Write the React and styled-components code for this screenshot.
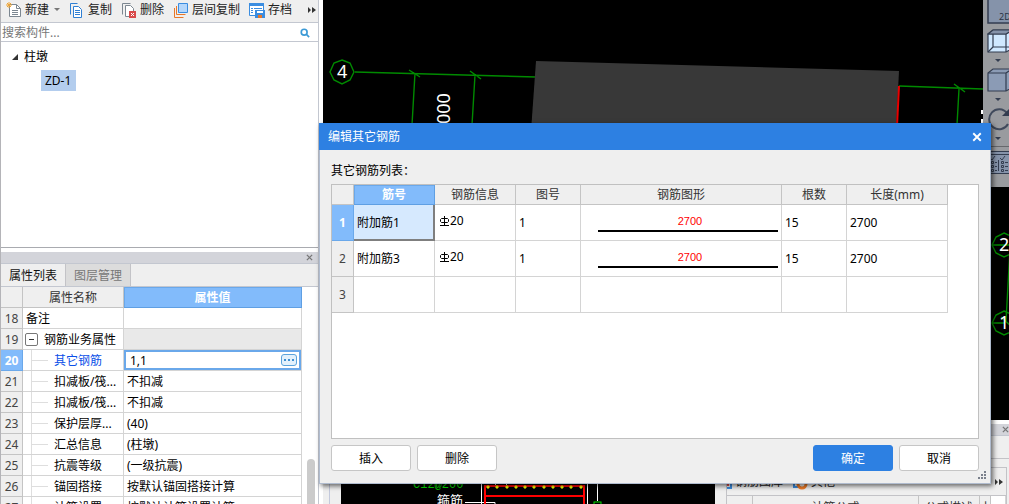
import React, { useState } from "react";
import styled, { createGlobalStyle, css } from "styled-components";

const properties = [
  { no: 18, name: "备注", value: "", level: 0 },
  { no: 19, name: "钢筋业务属性", value: "", level: 0, group: true },
  { no: 20, name: "其它钢筋", value: "1,1", level: 1, active: true },
  { no: 21, name: "扣减板/筏...", value: "不扣减", level: 1 },
  { no: 22, name: "扣减板/筏...", value: "不扣减", level: 1 },
  { no: 23, name: "保护层厚...", value: "(40)", level: 1 },
  { no: 24, name: "汇总信息", value: "(柱墩)", level: 1 },
  { no: 25, name: "抗震等级", value: "(一级抗震)", level: 1 },
  { no: 26, name: "锚固搭接", value: "按默认锚固搭接计算", level: 1 },
  { no: 27, name: "计算设置", value: "按默认计算设置计算", level: 1 },
];

const rebars = [
  { no: 1, name: "附加筋1", size: "20", figure: "1", length: "2700", count: "15" },
  { no: 2, name: "附加筋3", size: "20", figure: "1", length: "2700", count: "15" },
  { no: 3 },
];

const dots = [488, 497, 507, 516, 525, 534, 544, 553, 562, 571, 581];

export default function App() {
  const [selected, setSelected] = useState(1);
  const [search, setSearch] = useState("");
  const [other, setOther] = useState("1,1");
  const [open, setOpen] = useState(true);

  return (
    <>
      <GlobalStyle />
      <Page>
        <Sidebar>
          <Toolbar>
            <ToolbarButton type="button">
              <NewIcon />
              新建
              <Caret $left />
            </ToolbarButton>
            <ToolbarButton type="button">
              <CopyIcon />
              复制
            </ToolbarButton>
            <ToolbarButton type="button">
              <DeleteIcon />
              删除
            </ToolbarButton>
            <ToolbarButton type="button">
              <LayersIcon />
              层间复制
            </ToolbarButton>
            <ToolbarButton type="button">
              <SaveIcon />
              存档
            </ToolbarButton>
            <MoreButton type="button" aria-label="更多">
              <MoreIcon />
            </MoreButton>
          </Toolbar>
          <SearchBar>
            <SearchInput
              aria-label="搜索构件"
              placeholder="搜索构件..."
              value={search}
              onChange={(e) => setSearch(e.target.value)}
            />
            <SearchIcon />
          </SearchBar>
          <Tree>
            <TreeRoot>
              <svg width="8" height="8" viewBox="0 0 8 8">
                <path d="M7 1v6H1z" fill="#333" />
              </svg>
              柱墩
            </TreeRoot>
            <TreeItem type="button">ZD-1</TreeItem>
          </Tree>

          <DockBar>
            <CrossIcon color="#777" />
          </DockBar>
          <Tabs>
            <Tab type="button" $active>
              属性列表
            </Tab>
            <Tab type="button">图层管理</Tab>
          </Tabs>
          <PropertyArea>
            <PropertyTable>
              <colgroup>
                <col width="22" />
                <col width="101" />
                <col width="178" />
              </colgroup>
              <thead>
                <tr>
                  <HeadCell />
                  <HeadCell>属性名称</HeadCell>
                  <HeadCell $active>属性值</HeadCell>
                </tr>
              </thead>
              <tbody>
                {properties.map((p) => (
                  <tr key={p.no}>
                    <RowHead $active={p.active}>{p.no}</RowHead>
                    <NameCell>
                      <NameInner $active={p.active}>
                        {p.group && <Expander type="button" aria-label="折叠" />}
                        {p.level === 1 && <Branch />}
                        <span>{p.name}</span>
                      </NameInner>
                    </NameCell>
                    {p.active ? (
                      <EditCell>
                        <EditInner>
                          <EditInput
                            aria-label={p.name}
                            value={other}
                            onChange={(e) => setOther(e.target.value)}
                          />
                          <EllipsisButton
                            type="button"
                            aria-label="编辑"
                            onClick={() => setOpen(true)}
                          >
                            <svg width="10" height="2" viewBox="0 0 10 2">
                              <path d="M0 0h2v2H0zM4 0h2v2H4zM8 0h2v2H8z" fill="#3d8fd1" />
                            </svg>
                          </EllipsisButton>
                        </EditInner>
                      </EditCell>
                    ) : (
                      <ValueCell $muted={p.group}>{p.value}</ValueCell>
                    )}
                  </tr>
                ))}
              </tbody>
            </PropertyTable>
            <ScrollThumb />
          </PropertyArea>
        </Sidebar>

        <Main>
          <Viewport>
            <Scene />
            <ViewTools>
              <ViewButton type="button" $gap>
                <svg width="32" height="24" viewBox="0 0 32 24">
                  <rect x="1" y="-6" width="32" height="29" fill="#8593aa" stroke="#333d50" strokeWidth="1.5" />
                  <text x="12" y="20" fontSize="9" fill="#2a3344" fontFamily="Noto Sans">2D</text>
                </svg>
              </ViewButton>
              <ViewButton type="button" aria-label="线框">
                <Cube fill="#cfe8ff" wire />
              </ViewButton>
              <CaretRow><Caret $dark /></CaretRow>
              <ViewButton type="button" aria-label="实体">
                <Cube fill="#8b9bb5" />
              </ViewButton>
              <CaretRow><Caret $dark /></CaretRow>
              <ViewButton type="button" aria-label="旋转">
                <svg width="32" height="24" viewBox="0 0 32 24">
                  <path d="M20 6A10 10 0 1 0 21 17" fill="none" stroke="#404a5c" strokeWidth="2" />
                  <path d="M23 1v8h-8z" fill="#333d50" />
                </svg>
              </ViewButton>
              <CaretRow><Caret $dark /></CaretRow>
              <ToolRule />
              <ViewButton type="button" aria-label="显示设置">
                <svg width="32" height="24" viewBox="0 0 32 24" fill="none" stroke="#333d50">
                  <rect x="-2" y=".5" width="40" height="22" fill="#8593aa" />
                  <path d="M-2 3.5h40M11.500 9v11M3 7l2 2 3-4M13 7l2 2 3-4" />
                  <path d="M4.500 10.500h2v2h-2zM4.500 14.500h2v2h-2zM4.500 18.500h2v2h-2zM14.500 10.500h2v2h-2zM14.500 14.500h2v2h-2zM14.500 18.500h2v2h-2zM8 11.500h2M8 15.500h2M8 19.500h2M18 11.500h3M18 15.500h3M18 19.500h3" />
                </svg>
              </ViewButton>
            </ViewTools>
          </Viewport>

          <BottomDock>
            <DockBar $plain>
              <CrossIcon color="#777" />
            </DockBar>
            <BottomBody>
              <BottomGutter />
              <Section />
              <FormulaPanel>
                <FormulaBox>
                  <FormulaTools>
                    <ToolbarButton type="button">
                      <svg width="5" height="14" viewBox="0 0 5 14">
                        <path d="M0 1h4v12H0" fill="none" stroke="#3b8de0" strokeWidth="2" />
                        <path d="M0 8h2v3H0z" fill="#e24b4b" />
                      </svg>
                      钢筋图库
                    </ToolbarButton>
                    <ToolbarButton type="button">
                      <svg width="16" height="16" viewBox="0 0 16 16">
                        <path d="M2 1v12h7" fill="none" stroke="#3b8de0" strokeWidth="2" />
                        <circle cx="10" cy="10" r="4" fill="none" stroke="#f07c28" strokeWidth="3" />
                      </svg>
                      其他
                    </ToolbarButton>
                    <MoreButton type="button" aria-label="更多">
                      <MoreIcon />
                    </MoreButton>
                  </FormulaTools>
                  <FormulaTable>
                    <colgroup>
                      <col width="26" />
                      <col width="166" />
                      <col width="61" />
                      <col width="11" />
                      <col />
                    </colgroup>
                    <thead>
                      <tr>
                        <HeadCell />
                        <HeadCell>计算公式</HeadCell>
                        <HeadCell>公式描述</HeadCell>
                        <HeadCell>上</HeadCell>
                        <td />
                      </tr>
                    </thead>
                  </FormulaTable>
                </FormulaBox>
              </FormulaPanel>
            </BottomBody>
          </BottomDock>
        </Main>

        {open && (
          <Dialog role="dialog" aria-label="编辑其它钢筋">
            <TitleBar>
              编辑其它钢筋
              <CloseButton type="button" aria-label="关闭" onClick={() => setOpen(false)}>
                <CrossIcon color="#fff" big />
              </CloseButton>
            </TitleBar>
            <DialogBody>
              <ListLabel>其它钢筋列表：</ListLabel>
              <ListArea>
                <RebarTable>
                  <colgroup>
                    <col width="22" />
                    <col width="81" />
                    <col width="81" />
                    <col width="65" />
                    <col width="201" />
                    <col width="65" />
                    <col width="101" />
                  </colgroup>
                  <thead>
                    <tr>
                      <HeadCell />
                      <HeadCell $active>筋号</HeadCell>
                      <HeadCell>钢筋信息</HeadCell>
                      <HeadCell>图号</HeadCell>
                      <HeadCell>钢筋图形</HeadCell>
                      <HeadCell>根数</HeadCell>
                      <HeadCell>长度(mm)</HeadCell>
                    </tr>
                  </thead>
                  <tbody>
                    {rebars.map((r) => (
                      <RebarRow key={r.no} onClick={() => setSelected(r.no)}>
                        <RowHead $active={selected === r.no}>{r.no}</RowHead>
                        <RebarCell $selected={selected === r.no}>{r.name}</RebarCell>
                        <RebarCell>
                          {r.size && (
                            <RebarSize>
                              <svg width="10" height="11" viewBox="0 0 10 11">
                                <path
                                  d="M5.500 0v9M2.500 2.500h6l1 1v2l-1 1h-6l-1-1v-2zM1 9.500h9"
                                  fill="none"
                                  stroke="#000"
                                />
                              </svg>
                              {r.size}
                            </RebarSize>
                          )}
                        </RebarCell>
                        <RebarCell>{r.figure}</RebarCell>
                        <RebarCell>{r.length && <Shape>{r.length}</Shape>}</RebarCell>
                        <RebarCell>{r.count}</RebarCell>
                        <RebarCell>{r.length}</RebarCell>
                      </RebarRow>
                    ))}
                  </tbody>
                </RebarTable>
              </ListArea>
              <Actions>
                <Button type="button">插入</Button>
                <Button type="button">删除</Button>
                <Spacer />
                <Button type="button" $primary onClick={() => setOpen(false)}>
                  确定
                </Button>
                <Button type="button" onClick={() => setOpen(false)}>
                  取消
                </Button>
              </Actions>
            </DialogBody>
            <Grip width="9" height="9" viewBox="0 0 9 9">
              <path d="M6 0h2v2H6zM3 3h2v2H3zM6 3h2v2H6zM0 6h2v2H0zM3 6h2v2H3zM6 6h2v2H6z" fill="#7a808c" />
            </Grip>
          </Dialog>
        )}
      </Page>
    </>
  );
}

// 3D view of the model, with grid axes and dimension lines
function Scene() {
  return (
    <SceneSvg>
      <g fill="none" stroke="#008a00" strokeWidth="1.4">
        <path d="M19 60l8 3 4 9-4 8-8 4-8-4-4-8 4-9z" />
        <path d="M32 72l181 5M92 73l-3 52M152 75l-3 50M86 70l11 7M147 71l11 8" />
        <path d="M576 86l84 3M636 89l-2 36M631 84l11 8" />
        <path d="M681 233l9 4 3 8-3 8-9 4-8-4-4-8 4-8zM669 245h24M687 249l-4 72" />
        <path d="M681 311l9 4 3 8-3 8-9 4-8-4-4-8 4-8zM669 323h12M678 317l10 9" />
      </g>
      <path d="M213 61l363 10-3 60H208z" fill="#383838" />
      <path d="M576 86l-2 40" stroke="#e80000" strokeWidth="2" />
      <path d="M659 110v4M659 119v4" stroke="#fff" strokeWidth="2" />
      <g fill="#fff" fontFamily="Noto Sans" fontSize="18">
        <text x="14" y="78">4</text>
        <text x="676" y="251">2</text>
        <text x="676" y="329">1</text>
        <text transform="translate(127 124) rotate(-90)">000</text>
      </g>
    </SceneSvg>
  );
}

// section drawing under the dialog
function Section() {
  return (
    <SectionSvg>
      <g transform="translate(-341 -435)">
        <text x="413" y="487" fontSize="12" fill="#00e000" fontFamily="Liberation Mono">
          C12@200
        </text>
        <text x="437" y="504" fontSize="13" fill="#fff" fontFamily="Noto Sans CJK SC">
          箍筋
        </text>
        <g fill="none" stroke="#fff">
          <path d="M481.500 470v40M587.500 470v40M465 501.500h30v8M495.500 470v15M506.500 470v15M597.500 470v30" />
        </g>
        <path d="M485 510v-25h99v25M485 495h99" fill="none" stroke="#f00" strokeWidth="2" />
        <g fill="#ff0">
          {dots.map((x) => (
            <path key={x} d={`M${x - 2} 486l2-2 2 2-2 2z`} />
          ))}
        </g>
        <rect x="594" y="501" width="7" height="8" fill="none" stroke="#00e000" />
      </g>
    </SectionSvg>
  );
}

function Cube({ fill, wire }) {
  return (
    <svg width="32" height="24" viewBox="0 0 32 24" fill="none" stroke="#333d50" strokeWidth="1.200">
      <path d="M1 5l5-4h22v17l-9 5H1z" fill={fill} />
      <path d="M1 5h18v18M19 5l6-4" />
      {wire && <path d="M1 5l5-4h20l-7 4z" fill="#8593aa" />}
      {wire && <path d="M6 5v13h20M1 23l5-5" />}
    </svg>
  );
}

function NewIcon() {
  return (
    <svg width="16" height="16" viewBox="0 0 16 16" fill="none">
      <path d="M3.500 2.500h7l4 4v8h-11z" fill="#fff" stroke="#7c8791" />
      <path d="M10.500 2.500v4h4M6 8.500h6M6 10.500h6M6 12.500h6" stroke="#7c8791" />
      <path d="M3 0v6M0 3h6M1 1l4 4M5 1L1 5" stroke="#eda436" />
    </svg>
  );
}

function CopyIcon() {
  return (
    <svg width="16" height="16" viewBox="0 0 16 16" fill="none" stroke="#2f7fd3">
      <path d="M1.500 12.500v-11h7" />
      <path d="M4.500 4.500h5l3 3v8h-8z" fill="#fff" />
      <path d="M6 8.500h5M6 10.500h5M6 12.500h5" />
    </svg>
  );
}

function DeleteIcon() {
  return (
    <svg width="16" height="16" viewBox="0 0 16 16" fill="none">
      <path d="M1.500 12.500v-11h8" stroke="#7c8791" />
      <path d="M4.500 14.500v-11h5l3 3v8z" fill="#fff" stroke="#7c8791" />
      <path d="M8 9h7v7H8z" fill="#d94b4b" />
      <path d="M10 11l3 3M13 11l-3 3" stroke="#fff" />
    </svg>
  );
}

function LayersIcon() {
  return (
    <svg width="16" height="16" viewBox="0 0 16 16" fill="none">
      <path d="M1.500 6v9.500h9M3.500 4v8.500h9" stroke="#e8782a" />
      <path d="M5.500 1.500h9v9h-9z" fill="#b5d7fb" stroke="#3b8de0" />
    </svg>
  );
}

function SaveIcon() {
  return (
    <svg width="16" height="16" viewBox="0 0 16 16" fill="none">
      <path d="M.5 1.500h14v12H.5z" fill="#fff" stroke="#3b8de0" />
      <path d="M0 1h15v3H0z" fill="#3b8de0" />
      <path d="M2 6.500h2M5 6.500h8M2 8.500h2M2 10.500h2" stroke="#3b8de0" />
      <path d="M6 8h10v8H6z" fill="#3b8de0" />
      <path d="M8 9h6v2H8z" fill="#fff" />
      <path d="M9 13h4v3H9z" fill="#e8782a" />
    </svg>
  );
}

function SearchIcon() {
  return (
    <svg width="10" height="10" viewBox="0 0 12 12" fill="none" stroke="#3c9ad6" strokeWidth="2">
      <circle cx="5" cy="5" r="3.500" />
      <path d="M8 8l3 3" />
    </svg>
  );
}

function MoreIcon() {
  return (
    <svg width="8" height="6" viewBox="0 0 8 6" fill="#333">
      <path d="M0 0l3 3-3 3zM4 0l4 3-4 3z" />
    </svg>
  );
}

function CrossIcon({ color, big }) {
  const size = big ? 10 : 7;
  return (
    <svg width={size} height={size} viewBox="0 0 8 8">
      <path d="M1 1l6 6M7 1L1 7" stroke={color} strokeWidth="1.500" />
    </svg>
  );
}

const GlobalStyle = createGlobalStyle`
  * {
    box-sizing: border-box;
  }

  body {
    margin: 0;
    overflow: hidden;
    background: #efefef;
    color: #000;
    font-family: "Noto Sans", "Noto Sans CJK SC", sans-serif;
    font-size: 12px;
    line-height: 16px;
  }

  button,
  input {
    font: inherit;
    color: inherit;
    margin: 0;
    padding: 0;
    border: none;
    outline: none;
    background: none;
  }

  svg {
    display: block;
    flex: none;
  }
`;

const Page = styled.div`
  position: relative;
  display: grid;
  grid-template-columns: 319px 1fr;
  height: 100vh;
  overflow: hidden;
`;

const Sidebar = styled.aside`
  display: flex;
  flex-direction: column;
  min-height: 0;
  border-left: 1px solid #b4b4b8;
  border-right: 1px solid #c3c7d0;
  background: #fff;
`;

const Toolbar = styled.div`
  display: flex;
  align-items: center;
  gap: 9px;
  height: 23px;
  padding: 0 2px 3px 5px;
  background: #efefef;
  border-bottom: 1px solid #c3c7d0;
`;

const ToolbarButton = styled.button`
  display: flex;
  align-items: center;
  gap: 3px;
  color: #222;
  white-space: nowrap;
`;

const MoreButton = styled.button`
  margin-left: auto;
`;

const Caret = styled.span`
  border: 3px solid transparent;
  border-top-color: ${({ $dark }) => ($dark ? "#333d50" : "#777")};
  border-bottom-width: 0;
  margin-left: ${({ $left }) => ($left ? "2px" : "0")};
`;

const SearchBar = styled.div`
  display: flex;
  align-items: center;
  height: 19px;
  padding: 1px 8px 0 1px;
  border-bottom: 1px solid #c3c7d0;
`;

const SearchInput = styled.input`
  flex: 1;
  min-width: 0;

  &::placeholder {
    color: #777;
    opacity: 1;
  }
`;

const Tree = styled.div`
  height: 206px;
  padding: 6px 10px;
  border-bottom: 1px solid #a9abb0;
`;

const TreeRoot = styled.div`
  display: flex;
  align-items: center;
  gap: 5px;
  height: 18px;
`;

const TreeItem = styled.button`
  height: 21px;
  margin: 4px 0 0 30px;
  padding: 0 5px 0 4px;
  background: #b3cdee;
`;

const DockBar = styled.div`
  display: flex;
  align-items: center;
  justify-content: flex-end;
  flex: none;
  height: 12px;
  margin-top: 4px;
  padding-right: ${({ $plain }) => ($plain ? "0" : "5px")};
  background: #d3d4da;
  border-bottom: 1px solid #c3c7d0;
`;

const Tabs = styled.div`
  display: flex;
  flex: none;
  height: 23px;
  background: #efefef;
  border-bottom: 1px solid #c3c7d0;
`;

const Tab = styled.button`
  width: 65px;
  padding-top: 2px;
  color: #777;
  background: #dcdcdc;
  border-right: 1px solid #c3c3c7;

  ${({ $active }) =>
    $active &&
    css`
      color: #111;
      background: #efefef;
    `}
`;

const PropertyArea = styled.div`
  display: flex;
  justify-content: space-between;
  flex: 1;
  min-height: 0;
  overflow: hidden;
`;

const ScrollThumb = styled.div`
  align-self: flex-end;
  width: 8px;
  height: 45px;
  margin-right: 3px;
  border-radius: 4px 4px 0 0;
  background: #cbcbcb;
`;

const tableBase = css`
  table-layout: fixed;
  border-collapse: separate;
  border-spacing: 0;

  td,
  th {
    height: 21px;
    padding: 0;
    font-weight: 400;
    white-space: nowrap;
    overflow: hidden;
    border: 0 solid #d4d4d4;
    border-width: 0 1px 1px 0;
  }
`;

const PropertyTable = styled.table`
  ${tableBase}
  width: 301px;
  align-self: flex-start;

  th,
  td {
    padding-top: 2px;
  }
`;

const HeadCell = styled.th`
  &&& {
    color: #333;
    background: #efefef;
    border-color: #c4c4c4;
  }

  ${({ $active }) =>
    $active &&
    css`
      &&& {
        color: #fff;
        font-weight: 700;
        background: #82bbfb;
        border-color: #5f9fe3;
        box-shadow: inset 1px 1px #6aa8ea;
      }
    `}
`;

const RowHead = styled.th`
  &&& {
    color: #444;
    background: #efefef;
    border-color: #c4c4c4;
  }

  ${({ $active }) =>
    $active &&
    css`
      &&& {
        color: #fff;
        font-weight: 700;
        background: #82bbfb;
        border-color: #6aa8ea;
      }
    `}
`;

const NameCell = styled.td`
  && {
    padding-top: 0;
  }
`;

const NameInner = styled.div`
  display: flex;
  align-items: center;
  height: 20px;
  padding-left: 3px;
  color: ${({ $active }) => ($active ? "#0a4fe8" : "#000")};

  > span:last-child {
    padding-top: 2px;
  }
`;

const Branch = styled.span`
  width: 17px;
  height: 20px;
  margin: 0 6px 0 5px;
  border-left: 1px solid #dedede;
  background: linear-gradient(#dedede, #dedede) 0 10px / 100% 1px no-repeat;
`;

const Expander = styled.button`
  width: 13px;
  height: 13px;
  margin: 0 6px 0 -1px;
  border: 1px solid #777;
  border-radius: 2px;
  background: linear-gradient(#333, #333) center / 5px 1px no-repeat #fff;
`;

const ValueCell = styled.td`
  && {
    text-indent: 3px;
    background: ${({ $muted }) => ($muted ? "#e9e9e9" : "#fff")};
  }
`;

const EditCell = styled.td`
  && {
    padding-top: 0;
    box-shadow: inset 0 0 0 2px #6aa8ea;
  }
`;

const EditInner = styled.div`
  display: flex;
  align-items: center;
  height: 20px;
  padding: 0 4px 0 6px;
`;

const EditInput = styled.input`
  flex: 1;
  min-width: 0;
  padding-top: 2px;
`;

const EllipsisButton = styled.button`
  display: flex;
  align-items: center;
  justify-content: center;
  width: 16px;
  height: 12px;
  border: 1px solid #5ba3dc;
  border-radius: 3px;
  background: #e3f1fc;
`;

const Main = styled.main`
  display: flex;
  flex-direction: column;
  min-width: 0;
  min-height: 0;
  padding-left: 4px;
  background: #fff;
`;

const Viewport = styled.div`
  position: relative;
  display: flex;
  justify-content: flex-end;
  align-items: flex-start;
  flex: 1;
  overflow: hidden;
  background: #000;
`;

const SceneSvg = styled.svg`
  position: absolute;
  inset: 0;
  width: 100%;
  height: 100%;
`;

const ViewTools = styled.div`
  position: relative;
  width: 26px;
  padding: 0 0 12px 4px;
  overflow: hidden;
  background: #999b9f;
`;

const ViewButton = styled.button`
  display: block;
  height: 24px;
  margin-bottom: ${({ $gap }) => ($gap ? "5px" : "0")};
`;

const CaretRow = styled.div`
  display: flex;
  align-items: center;
  justify-content: center;
  height: 15px;
`;

const ToolRule = styled.div`
  height: 1px;
  margin: 0 0 4px;
  background: #66686c;
`;

const BottomDock = styled.div`
  display: flex;
  flex-direction: column;
  height: 84px;
`;

const BottomBody = styled.div`
  display: flex;
  flex: 1;
  min-height: 0;
  background: #efefef;
`;

const BottomGutter = styled.div`
  width: 18px;
  border-left: 6px solid #efefef;
  box-shadow: inset 1px 0 #c3c9dc;
`;

const SectionSvg = styled.svg`
  flex: 1;
  min-width: 0;
  height: 100%;
  background: #000;
`;

const FormulaPanel = styled.div`
  width: 294px;
  padding: 8px 2px 0 11px;
  margin-top: 22px;
  border-top: 1px solid #c3c3c7;
`;

const FormulaBox = styled.div`
  border: 1px solid #c3c3c7;
  background: #fff;
`;

const FormulaTools = styled.div`
  display: flex;
  align-items: center;
  gap: 9px;
  height: 28px;
  padding-right: 3px;
  background: #efefef;
  border-bottom: 1px solid #c3c3c7;
`;

const FormulaTable = styled.table`
  ${tableBase}
  width: 100%;

  th {
    padding-top: 4px;
  }
`;

const Dialog = styled.section`
  position: absolute;
  top: 123px;
  left: 319px;
  right: 18px;
  background: #efefef;
  border: 1px solid #b0bccf;
  border-top: none;
  box-shadow: 2px 2px 5px rgba(0, 0, 0, 0.6);
`;

const TitleBar = styled.header`
  display: flex;
  align-items: center;
  justify-content: space-between;
  height: 27px;
  margin: 0 -1px;
  padding: 0 5px 0 9px;
  color: #fff;
  background: #2d80e2;
`;

const CloseButton = styled.button`
  display: flex;
  align-items: center;
  justify-content: center;
  width: 18px;
  height: 18px;
`;

const DialogBody = styled.div`
  padding: 12px 11px;
`;

const ListLabel = styled.div`
  height: 22px;
  line-height: 18px;
`;

const ListArea = styled.div`
  height: 255px;
  border: 1px solid #c0c0c0;
  background: #fff;
`;

const RebarTable = styled.table`
  ${tableBase}
  width: 616px;

  thead th {
    height: 20px;
  }
`;

const RebarRow = styled.tr`
  && > td,
  && > th {
    height: 36px;
  }
`;

const RebarCell = styled.td`
  &&& {
    padding-left: 3px;

    ${({ $selected }) =>
      $selected &&
      css`
        background: #d6e9fe;
        border-color: #7f7f7f;
        box-shadow: inset -1px -1px #7f7f7f;
      `}
  }
`;

const RebarSize = styled.div`
  display: flex;
  align-items: center;
  gap: 1px;
  padding: 0 0 3px 1px;
`;

const Shape = styled.div`
  width: 180px;
  margin-left: 14px;
  color: #f00;
  font-family: "Liberation Sans", sans-serif;
  font-size: 11px;
  text-align: center;
  border-bottom: 2px solid #000;
  padding: 0 0 1px 4px;
`;

const Actions = styled.div`
  display: flex;
  gap: 6px;
  margin-top: 6px;
`;

const Spacer = styled.div`
  flex: 1;
`;

const Button = styled.button`
  width: 80px;
  height: 26px;
  padding-top: 1px;
  border: 1px solid #c6c6c6;
  border-radius: 3px;
  background: #fff;

  ${({ $primary }) =>
    $primary &&
    css`
      color: #fff;
      border-color: #2d80e2;
      background: #2d80e2;
    `}
`;

const Grip = styled.svg`
  position: absolute;
  right: 3px;
  bottom: 3px;
`;
